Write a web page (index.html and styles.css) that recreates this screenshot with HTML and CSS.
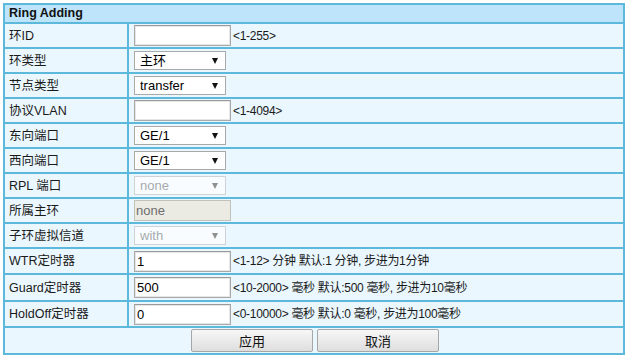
FILE: index.html
```html
<!DOCTYPE html>
<html lang="zh-CN">
<head>
<meta charset="utf-8">
<title>Ring Adding</title>
<link rel="stylesheet" href="styles.css">
</head>
<body>
<table class="form">
  <colgroup><col class="c-lbl"><col class="c-val"></colgroup>
  <tr class="head"><th colspan="2">Ring Adding</th></tr>
  <tr class="r25"><td class="lbl">环ID</td><td class="val"><input class="txt" type="text" value=""><span class="hint">&lt;1-255&gt;</span></td></tr>
  <tr class="r25"><td class="lbl">环类型</td><td class="val"><span class="sel"><select><option>主环</option></select></span></td></tr>
  <tr class="r25"><td class="lbl">节点类型</td><td class="val"><span class="sel"><select><option>transfer</option></select></span></td></tr>
  <tr class="r25"><td class="lbl">协议VLAN</td><td class="val"><input class="txt" type="text" value=""><span class="hint">&lt;1-4094&gt;</span></td></tr>
  <tr class="r25"><td class="lbl">东向端口</td><td class="val"><span class="sel"><select><option>GE/1</option></select></span></td></tr>
  <tr class="r25"><td class="lbl">西向端口</td><td class="val"><span class="sel"><select><option>GE/1</option></select></span></td></tr>
  <tr class="r25"><td class="lbl">RPL 端口</td><td class="val"><span class="sel off"><select disabled><option>none</option></select></span></td></tr>
  <tr class="r25"><td class="lbl">所属主环</td><td class="val"><input class="txt dis" type="text" value="none" disabled></td></tr>
  <tr class="r25"><td class="lbl">子环虚拟信道</td><td class="val"><span class="sel off"><select disabled><option>with</option></select></span></td></tr>
  <tr class="r26"><td class="lbl">WTR定时器</td><td class="val"><input class="txt" type="text" value="1"><span class="hint">&lt;1-12&gt; 分钟 默认:1 分钟, 步进为1分钟</span></td></tr>
  <tr class="r27"><td class="lbl">Guard定时器</td><td class="val"><input class="txt" type="text" value="500"><span class="hint">&lt;10-2000&gt; 毫秒 默认:500 毫秒, 步进为10毫秒</span></td></tr>
  <tr class="r26"><td class="lbl">HoldOff定时器</td><td class="val"><input class="txt" type="text" value="0"><span class="hint">&lt;0-10000&gt; 毫秒 默认:0 毫秒, 步进为100毫秒</span></td></tr>
  <tr class="r27 btnrow"><td colspan="2"><div class="btns"><button class="btn" type="button">应用</button><button class="btn" type="button">取消</button></div></td></tr>
</table>
</body>
</html>
```

FILE: styles.css
```css
html, body {
  margin: 0;
  padding: 0;
  background: #ffffff;
}
body {
  padding: 3px;
  font-family: "Liberation Sans", "Noto Sans CJK SC", sans-serif;
  font-size: 12px;
  color: #1a1a1a;
}
.form {
  border-collapse: collapse;
  width: 622px;
  table-layout: fixed;
}
.c-lbl { width: 124px; }
.c-val { width: auto; }
.form th,
.form td {
  border: 2px solid #5cb9dc;
  padding: 0;
  vertical-align: middle;
}
.head {
  height: 19px;
}
.head th {
  background: #bde4fa;
  text-align: left;
  padding-left: 4px;
  font-family: "Liberation Sans", "Noto Sans CJK SC", sans-serif;
  font-weight: 700;
  font-size: 12.5px;
  color: #111;
  line-height: 15px;
}
.form td {
  background: #eaf7fe;
}
.r25 { height: 25px; }
.r26 { height: 26px; }
.r27 { height: 27px; }
.lbl {
  padding-left: 4px !important;
  font-size: 12.5px;
  line-height: 16px;
  white-space: nowrap;
  color: #1a1a1a;
}
.val {
  padding-left: 5px !important;
  white-space: nowrap;
  font-size: 0;
}
.txt {
  box-sizing: border-box;
  width: 97px;
  height: 21px;
  margin: 0;
  padding: 0 2px;
  border: 1px solid #a9a9a9;
  border-top-color: #9a9a9a;
  box-shadow: inset 0 0 0 1px #e6e6e6;
  background: #fff;
  font-family: "Liberation Sans", Arial, sans-serif;
  font-size: 13px;
  color: #000;
  vertical-align: middle;
  outline: none;
}
.txt.dis {
  background: #ebebe4;
  color: #6d6d6d;
  border-color: #c2c2bc;
  box-shadow: none;
  padding-left: 1px;
}
.hint {
  display: inline-block;
  vertical-align: middle;
  margin-left: 2px;
  font-size: 12px;
  line-height: 16px;
  letter-spacing: -0.3px;
  color: #1a1a1a;
}
.sel {
  position: relative;
  display: inline-block;
  vertical-align: middle;
  width: 92px;
  height: 19px;
}
.sel select {
  -webkit-appearance: none;
  appearance: none;
  box-sizing: border-box;
  width: 92px;
  height: 19px;
  margin: 0;
  padding: 0 0 0 5px;
  border: 1px solid #a9a9a9;
  border-radius: 0;
  background: #fff;
  font-family: "Liberation Sans", Arial, "Noto Sans CJK SC", sans-serif;
  font-size: 13px;
  color: #000;
  outline: none;
}
.sel::after {
  content: "";
  position: absolute;
  left: 78px;
  top: 7px;
  border-left: 3px solid transparent;
  border-right: 3px solid transparent;
  border-top: 6px solid #111;
  pointer-events: none;
}
.sel.off select {
  color: #8a8a8a;
  border-color: #c4c4c4;
  background: #fff;
}
.sel.off::after {
  border-top-color: #8f8f8f;
}
.btnrow td {
  text-align: center;
}
.btns {
  display: flex;
  justify-content: center;
  gap: 4px;
  padding-left: 2px;
}
.btn {
  box-sizing: border-box;
  width: 122px;
  height: 23px;
  margin: 0;
  padding: 0;
  border: 1px solid #a6a6a6;
  border-radius: 2px;
  background: linear-gradient(#f7f7f7, #dedede);
  font-family: "Noto Sans CJK SC", sans-serif;
  font-size: 13px;
  color: #111;
}
```
